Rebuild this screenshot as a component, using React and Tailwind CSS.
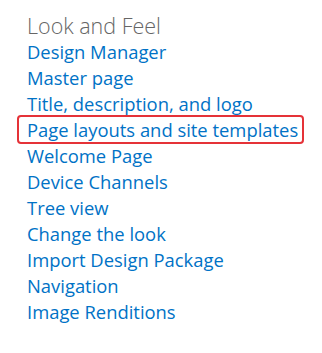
import React from 'react';

const links = [
  'Design Manager',
  'Master page',
  'Title, description, and logo',
  'Page layouts and site templates',
  'Welcome Page',
  'Device Channels',
  'Tree view',
  'Change the look',
  'Import Design Package',
  'Navigation',
  'Image Renditions',
];

const App = () => {
  return (
    <div className="min-h-screen bg-white pl-[27px] pt-[11px] font-['Open_Sans',sans-serif]">
      <h2 className="text-[21.5px] leading-[30px] font-light text-[#666666]">Look and Feel</h2>
      <ul className="mt-[-2px]">
        {links.map((label) => (
          <li key={label} className="relative">
            <a href="#" className="text-[18.4px] leading-[26px] text-[#0072c6]">
              {label}
            </a>
            {label === 'Page layouts and site templates' && (
              <span className="pointer-events-none absolute left-[-10px] top-[-2px] h-[29px] w-[287px] rounded-[4px] border-2 border-[#e53238]" />
            )}
          </li>
        ))}
      </ul>
    </div>
  );
};

export default App;
